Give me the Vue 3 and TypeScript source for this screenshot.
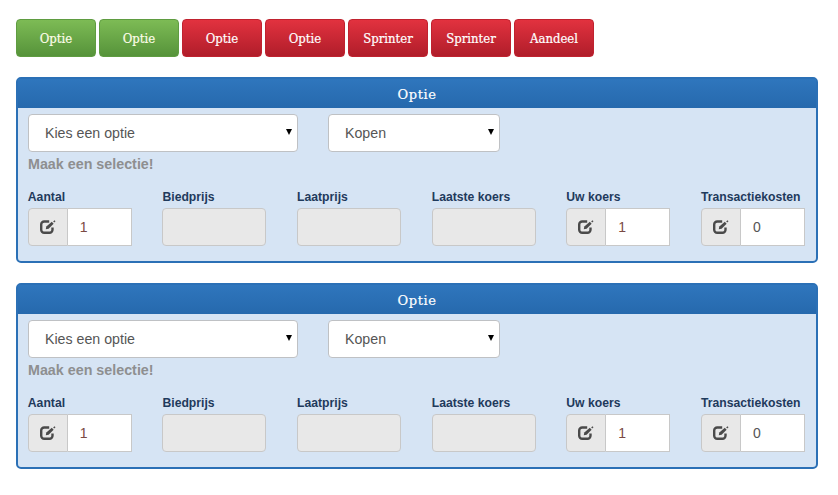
<script setup lang="ts">
const buttons: { label: string; tone: string }[] = [
  { label: 'Optie', tone: 'green' },
  { label: 'Optie', tone: 'green' },
  { label: 'Optie', tone: 'red' },
  { label: 'Optie', tone: 'red' },
  { label: 'Sprinter', tone: 'red' },
  { label: 'Sprinter', tone: 'red' },
  { label: 'Aandeel', tone: 'red' },
]
const fields: { label: string; value: string; editable: boolean }[] = [
  { label: 'Aantal', value: '1', editable: true },
  { label: 'Biedprijs', value: '', editable: false },
  { label: 'Laatprijs', value: '', editable: false },
  { label: 'Laatste koers', value: '', editable: false },
  { label: 'Uw koers', value: '1', editable: true },
  { label: 'Transactiekosten', value: '0', editable: true },
]
const panels = [1, 2]
</script>

<template>
  <div class="page">
    <div class="buttons">
      <button v-for="(b, i) in buttons" :key="i" class="btn" :class="b.tone">{{ b.label }}</button>
    </div>
    <section v-for="p in panels" :key="p" class="panel">
      <header class="heading">Optie</header>
      <div class="body">
        <div class="selects">
          <div class="select-wrap wide">
            <select class="select"><option>Kies een optie</option></select>
          </div>
          <div class="select-wrap narrow">
            <select class="select"><option>Kopen</option></select>
          </div>
        </div>
        <p class="message">Maak een selectie!</p>
        <div class="fields">
          <div v-for="f in fields" :key="f.label" class="field">
            <label class="label">{{ f.label }}</label>
            <div v-if="f.editable" class="group">
              <span class="addon">
                <svg width="18" height="16" viewBox="0 0 18 16" fill="none">
                  <path d="M13.500 8.500v2.300a3 3 0 0 1-3 3H5.200a3 3 0 0 1-3-3V5.500a3 3 0 0 1 3-3h5" stroke="#4a4a4a" stroke-width="2.400" />
                  <path d="M6.800 10.200l.5-2.800 5.500-4.600 1.800 1.900-5 5z" fill="#4a4a4a" />
                  <path d="M14.200 2.500l1.300-1.300 1 1-1.300 1.300z" fill="#4a4a4a" />
                </svg>
              </span>
              <input class="input" :class="{ warm: f.value === '1' }" :value="f.value" />
            </div>
            <input v-else class="input disabled" disabled />
          </div>
        </div>
      </div>
    </section>
  </div>
</template>

<style scoped>
.page {
  width: 838px;
  height: 495px;
  box-sizing: border-box;
  padding: 19px 20px 0 16px;
  background: #fff;
  font-family: "Liberation Sans", Arial, sans-serif;
  overflow: hidden;
}
.buttons {
  display: flex;
  gap: 3px;
  margin-bottom: 20px;
}
.btn {
  width: 80px;
  height: 38px;
  padding: 0;
  border: 1px solid transparent;
  border-radius: 4px;
  color: #fff;
  font-family: "DejaVu Serif", serif;
  font-size: 13px;
  font-stretch: condensed;
  -webkit-text-stroke: 0.2px currentColor;
}
.green {
  background: linear-gradient(#7dbb55, #56933a);
  border-color: #5f9c41;
  color: #fdfde8;
}
.red {
  background: linear-gradient(#e2323f, #b01d2a);
  border-color: #c0222f;
}
.panel {
  border: 2px solid #2b70b6;
  border-radius: 5px;
  background: #d6e4f4;
  margin-bottom: 20px;
  height: 186px;
  box-sizing: border-box;
}
.heading {
  height: 29px;
  line-height: 32px;
  text-align: center;
  color: #fff;
  font-family: "DejaVu Serif", serif;
  font-size: 13px;
  letter-spacing: 0.6px;
  -webkit-text-stroke: 0.2px #fff;
  background: linear-gradient(#2f76bd, #2669ad);
}
.body {
  padding: 6px 11px 0 10px;
}
.selects {
  display: flex;
  gap: 30px;
}
.select-wrap {
  position: relative;
}
.select-wrap::after {
  content: "";
  position: absolute;
  right: 6px;
  top: 15px;
  border-left: 3px solid transparent;
  border-right: 3px solid transparent;
  border-top: 6px solid #000;
}
.wide { width: 270px; }
.narrow { width: 172px; }
.select {
  display: block;
  width: 100%;
  height: 38px;
  box-sizing: border-box;
  padding: 0 0 0 16px;
  appearance: none;
  background: #fff;
  border: 1px solid #bfc1c4;
  border-radius: 4px;
  color: #555;
  font-family: "Liberation Sans", Arial, sans-serif;
  font-size: 14.2px;
}
.message {
  margin: 4px 0 0;
  height: 17px;
  line-height: 17px;
  font-size: 14.3px;
  font-weight: bold;
  color: #8e8f90;
}
.fields {
  display: flex;
  justify-content: space-between;
  margin: 17px 0 0 -0.2px;
}
.field {
  width: 104px;
}
.label {
  display: block;
  height: 15px;
  line-height: 15px;
  margin-bottom: 3px;
  font-size: 12.2px;
  font-weight: bold;
  color: #1f3a5c;
  white-space: nowrap;
}
.group {
  display: flex;
  height: 38px;
}
.addon {
  flex: none;
  width: 40px;
  box-sizing: border-box;
  display: flex;
  align-items: center;
  justify-content: center;
  background: #e8e8e8;
  border: 1px solid #c8c8c8;
  border-radius: 4px 0 0 4px;
}
.input {
  display: block;
  flex: 1;
  min-width: 0;
  width: 100%;
  height: 38px;
  box-sizing: border-box;
  padding: 0 12px;
  background: #fff;
  border: 1px solid #c8c8c8;
  border-left: 0;
  color: #555;
  font-family: "Liberation Sans", Arial, sans-serif;
  font-size: 14px;
  outline: none;
}
.warm {
  color: #7a4a44;
}
.disabled {
  background: #e8e8e8;
  border: 1px solid #c8c8c8;
  border-radius: 4px;
}
</style>
